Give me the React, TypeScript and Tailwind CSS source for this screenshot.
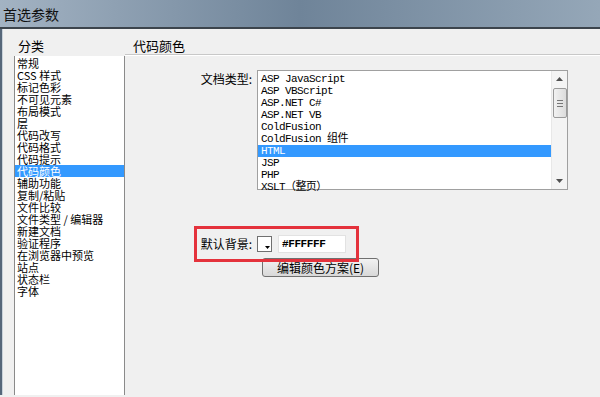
import React from "react";

const categories = [
  "常规",
  "CSS 样式",
  "标记色彩",
  "不可见元素",
  "布局模式",
  "层",
  "代码改写",
  "代码格式",
  "代码提示",
  "代码颜色",
  "辅助功能",
  "复制/粘贴",
  "文件比较",
  "文件类型 / 编辑器",
  "新建文档",
  "验证程序",
  "在浏览器中预览",
  "站点",
  "状态栏",
  "字体",
];

const docTypes = [
  "ASP JavaScript",
  "ASP VBScript",
  "ASP.NET C#",
  "ASP.NET VB",
  "ColdFusion",
  "ColdFusion 组件",
  "HTML",
  "JSP",
  "PHP",
  "XSLT（整页）",
];

const cjk = "font-['Noto_Sans_CJK_SC','Liberation_Sans',sans-serif]";
const mono = "font-['Liberation_Mono','Noto_Sans_CJK_SC',monospace]";

export default function App() {
  return (
    <div className={`relative w-[600px] h-[397px] overflow-hidden bg-[#f0f0f0] text-black ${cjk}`}>
      {/* Title bar */}
      <div className="h-[29px] flex items-center pl-[3px] bg-gradient-to-r from-[#a3b3c3] via-[#6f8499] to-[#95a7b8] border-b-2 border-[#3c444c]">
        <span className="text-[14px] text-[#111] leading-none">首选参数</span>
      </div>

      <div className="flex h-[366px]">
        <div className="w-[3px] bg-[#56677a] border-r border-[#c9d2da]" />

        {/* Category column */}
        <div className="w-[122px] flex flex-col pl-[11px]">
          <div className="h-[27px] pt-[10px] pl-[4px] text-[13px] leading-none">分类</div>
          <div className="flex-1 bg-white border-l border-r border-[#8a8a8a] pt-[1px]">
            {categories.map((c) =>
              c === "代码颜色" ? (
                <div key={c} className="h-[12px] leading-[12px] text-[11px] pl-[2px] bg-[#3399ff] text-white whitespace-nowrap">
                  {c}
                </div>
              ) : (
                <div key={c} className="h-[12px] leading-[12px] text-[11px] pl-[2px] whitespace-nowrap">
                  {c}
                </div>
              )
            )}
          </div>
        </div>

        {/* Settings column */}
        <div className="flex-1 flex flex-col">
          <div className="h-[26px] pt-[10px] pl-[8px] text-[13px] leading-none border-b border-[#c8c8c8] shadow-[0_1px_0_#ffffff]">
            代码颜色
          </div>

          <div className="flex mt-[15px]">
            <div className="w-[132px] text-right pr-[5px] pt-[2px] text-[12px] leading-[14px]">文档类型:</div>
            <div className="w-[311px] h-[120px] flex bg-white border border-[#a0a0a0]">
              <div className={`flex-1 pt-[2px] ${mono}`}>
                {docTypes.map((d) =>
                  d === "HTML" ? (
                    <div key={d} className="h-[12px] leading-[12px] text-[11px] tracking-[-0.6px] pl-[3px] bg-[#3399ff] text-white">
                      {d}
                    </div>
                  ) : (
                    <div key={d} className="h-[12px] leading-[12px] text-[11px] tracking-[-0.6px] pl-[3px] whitespace-nowrap">
                      {d}
                    </div>
                  )
                )}
              </div>
              <div className="w-[16px] flex flex-col items-center bg-[#f4f4f4] border-l border-[#e8e8e8]">
                <div className="h-[16px] flex items-center justify-center">
                  <svg width="7" height="4" viewBox="0 0 7 4"><path d="M0 4 L3.5 0 L7 4 Z" fill="#505050" /></svg>
                </div>
                <div className="w-[14px] h-[30px] mt-[1px] bg-gradient-to-r from-[#f2f2f2] to-[#dcdcdc] border border-[#9a9a9a] rounded-[2px] flex flex-col items-center justify-center gap-[2px]">
                  <div className="w-[6px] h-px bg-[#777]" />
                  <div className="w-[6px] h-px bg-[#777]" />
                  <div className="w-[6px] h-px bg-[#777]" />
                </div>
                <div className="flex-1" />
                <div className="h-[16px] flex items-center justify-center">
                  <svg width="7" height="4" viewBox="0 0 7 4"><path d="M0 0 L3.5 4 L7 0 Z" fill="#505050" /></svg>
                </div>
              </div>
            </div>
          </div>

          <div className="flex items-center mt-[45px] h-[18px]">
            <div className="w-[132px] text-right pr-[5px] text-[12px] leading-[14px]">默认背景:</div>
            <div className="w-[15px] h-[16px] bg-white border border-[#707070] flex items-end justify-end pr-[1px] pb-[2px]">
              <svg width="5" height="3" viewBox="0 0 5 3"><path d="M0 0 L2.5 3 L5 0 Z" fill="#000" /></svg>
            </div>
            <div className="ml-[6px] w-[68px] h-[18px] bg-white border border-[#e2e2e2] pl-[3px] flex items-center">
              <span className={`text-[11px] leading-none tracking-[-0.4px] font-bold ${mono}`}>#FFFFFF</span>
            </div>
          </div>

          <div className="flex mt-[5px] pl-[137px]">
            <div className="w-[117px] h-[19px] border border-[#707070] rounded-[3px] bg-gradient-to-b from-[#f2f2f2] to-[#d8d8d8] flex items-center justify-center text-[12px] leading-none">
              编辑颜色方案(E)
            </div>
          </div>
        </div>
      </div>

      {/* Annotation box */}
      <div className="absolute left-[194px] top-[226px] w-[165px] h-[36px] border-[3px] border-[#e4323c]" />
    </div>
  );
}
